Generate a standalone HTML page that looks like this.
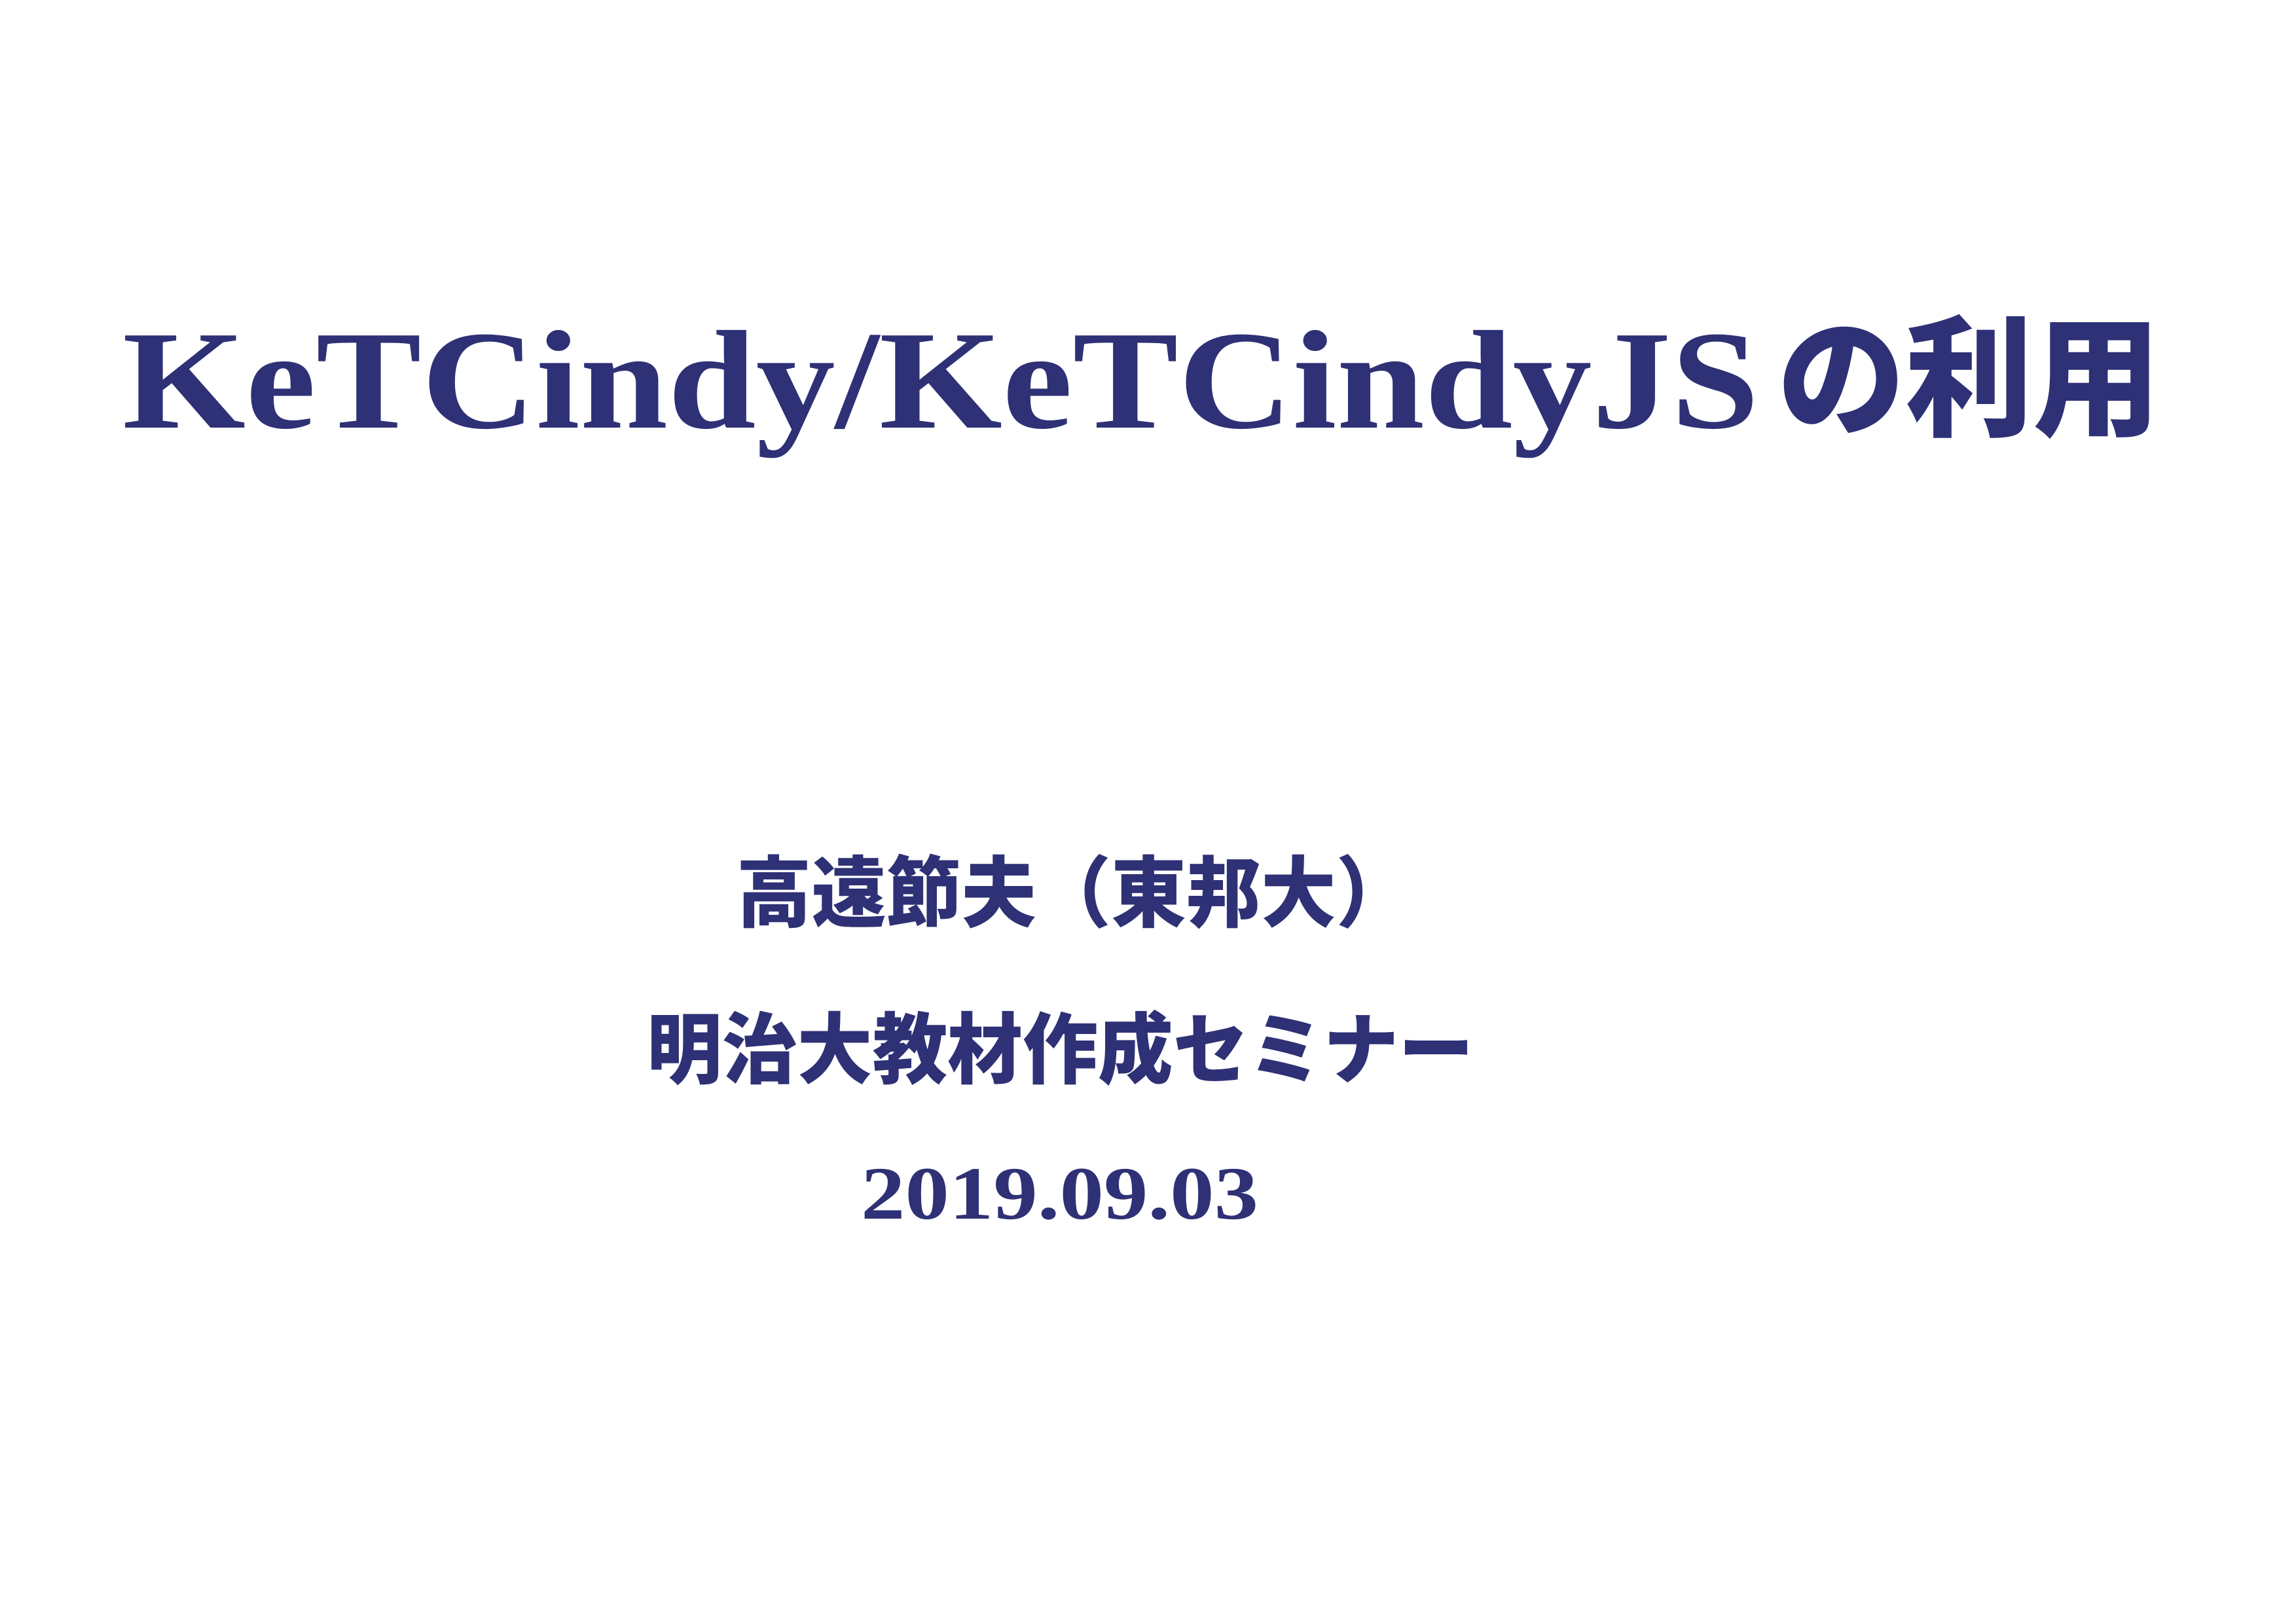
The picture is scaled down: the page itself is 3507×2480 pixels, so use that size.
<!DOCTYPE html>
<html><head><meta charset="utf-8"><style>html,body{margin:0;padding:0;background:#fff}svg{display:block}</style></head>
<body>
<svg width="3507" height="2480" viewBox="0 0 3507 2480" xmlns="http://www.w3.org/2000/svg">
<rect width="3507" height="2480" fill="#fff"/>
<g fill="#2e3175">
<text x="187" y="653" font-family="Liberation Serif, serif" font-weight="bold" font-size="215" textLength="2500" lengthAdjust="spacingAndGlyphs">KeTCindy/KeTCindyJS</text>
<text x="2715" y="650" font-family="'Liberation Sans','Noto Sans CJK JP',sans-serif" font-weight="900" font-size="200" textLength="585" lengthAdjust="spacingAndGlyphs">の利用</text>
<text x="1125" y="1406" font-family="'Liberation Sans','Noto Sans CJK JP',sans-serif" font-weight="900" font-size="118" textLength="1030" lengthAdjust="spacingAndGlyphs">高遠節夫（東邦大）</text>
<text x="988" y="1645" font-family="'Liberation Sans','Noto Sans CJK JP',sans-serif" font-weight="900" font-size="118" textLength="1263" lengthAdjust="spacingAndGlyphs">明治大教材作成セミナー</text>
<text x="1315" y="1861" font-family="Liberation Serif, serif" font-weight="bold" font-size="115" textLength="607" lengthAdjust="spacingAndGlyphs">2019.09.03</text>
</g>
</svg>
</body></html>
